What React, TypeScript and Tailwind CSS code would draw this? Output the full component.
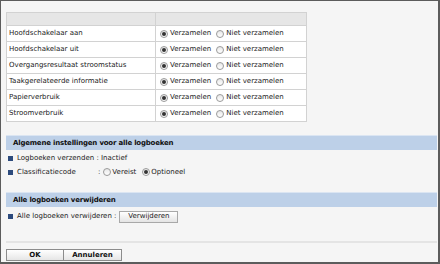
import React from 'react';

const rows = [
  'Hoofdschakelaar aan',
  'Hoofdschakelaar uit',
  'Overgangsresultaat stroomstatus',
  'Taakgerelateerde informatie',
  'Papierverbruik',
  'Stroomverbruik',
];

const Radio: React.FC<{ on?: boolean }> = ({ on }) => (
  <span className="inline-flex w-[8px] h-[8px] rounded-full border border-[#9a9a9a] bg-gradient-to-b from-[#e8e8e8] to-white items-center justify-center shrink-0">
    {on && <span className="w-[4px] h-[4px] rounded-full bg-[#333]" />}
  </span>
);

const Bullet = () => <span className="w-[5px] h-[5px] bg-[#2c4a7c] shrink-0 mr-[4px]" />;

const SectionBar: React.FC<{ title: string }> = ({ title }) => (
  <div className="h-[15px] bg-[#bdd0e8] border-t border-[#dbe5f2] flex items-center pl-[7px] font-bold text-[#111] tracking-[-0.2px]">
    {title}
  </div>
);

export default function App() {
  return (
    <div
      className="w-[440px] h-[264px] bg-[#f5f5f5] border-t-[1px] border-l-[1px] border-r-[2px] border-b-[2px] border-[#5c5c5c] text-[7px] text-[#222] flex flex-col"
      style={{ fontFamily: '"DejaVu Sans", Verdana, sans-serif' }}
    >
      <div className="pl-[5px] pr-[1px] pt-[11px] flex flex-col">
        <div className="w-[301px] border border-[#d2d2d2] bg-white">
          <div className="flex h-[12px] bg-[#e6e6e6]">
            <div className="w-[149px] border-r border-[#d2d2d2]" />
            <div className="flex-1" />
          </div>
          {rows.map((r) => (
            <div key={r} className="flex h-[16px] border-t border-[#d2d2d2]">
              <div className="w-[149px] border-r border-[#d2d2d2] flex items-center pl-[2px]">{r}</div>
              <div className="flex-1 flex items-center pl-[4px] gap-[2px]">
                <Radio on />
                <span className="mr-[3px]">Verzamelen</span>
                <Radio />
                <span>Niet verzamelen</span>
              </div>
            </div>
          ))}
        </div>

        <div className="mt-[13px]">
          <SectionBar title="Algemene instellingen voor alle logboeken" />
          <div className="flex items-center h-[14px] mt-[1px] pl-[2px]">
            <Bullet />
            <span>Logboeken verzenden : Inactief</span>
          </div>
          <div className="flex items-center h-[14px] pl-[2px]">
            <Bullet />
            <span className="w-[81px]">Classificatiecode</span>
            <span className="mr-[3px]">:</span>
            <Radio />
            <span className="ml-[1px] mr-[6px]">Vereist</span>
            <Radio on />
            <span className="ml-[1px]">Optioneel</span>
          </div>
        </div>

        <div className="mt-[13px]">
          <SectionBar title="Alle logboeken verwijderen" />
          <div className="flex items-center h-[17px] mt-[1px] pl-[2px]">
            <Bullet />
            <span className="mr-[3px]">Alle logboeken verwijderen :</span>
            <button className="h-[12px] w-[59px] border border-[#a8a8a8] bg-gradient-to-b from-white to-[#e4e4e4] flex items-center justify-center text-[#222]">
              Verwijderen
            </button>
          </div>
        </div>

        <div className="mt-[16px] h-[2px] bg-[#e4e4e4]" />
        <div className="flex mt-[6px] h-[12px]">
          <button className="w-[58px] h-[12px] border border-[#8c8c8c] bg-gradient-to-b from-white to-[#e6e6e6] font-bold flex items-center justify-center text-[#111]">
            OK
          </button>
          <button className="w-[58px] h-[12px] border border-[#8c8c8c] border-l-0 bg-gradient-to-b from-white to-[#e6e6e6] font-bold flex items-center justify-center text-[#111]">
            Annuleren
          </button>
        </div>
      </div>
    </div>
  );
}
